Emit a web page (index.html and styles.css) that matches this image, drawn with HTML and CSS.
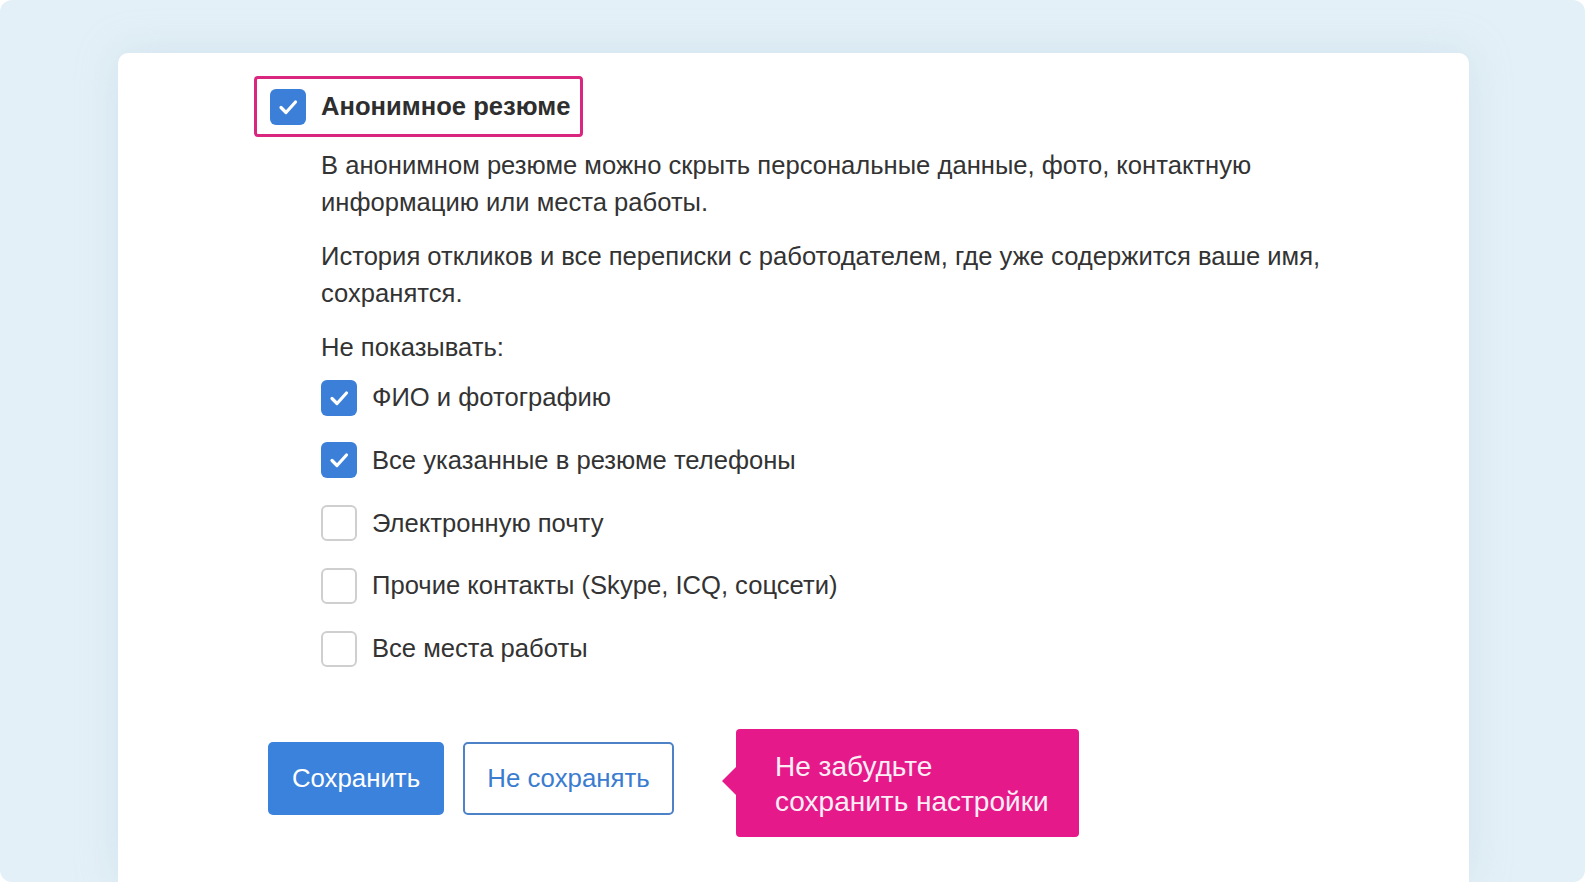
FILE: index.html
```html
<!DOCTYPE html>
<html lang="ru">
<head>
<meta charset="utf-8">
<title>Анонимное резюме</title>
<link rel="stylesheet" href="styles.css">
</head>
<body>
<div class="frame">
  <div class="card">
    <div class="title-box">
      <span class="cb cb-on"><svg viewBox="0 0 36 36" width="36" height="36"><path d="M11 18.5 L16 23.5 L25.5 13" fill="none" stroke="#fff" stroke-width="3.2" stroke-linecap="round" stroke-linejoin="round"/></svg></span>
      <span class="title">Анонимное резюме</span>
    </div>
    <div class="body">
      <p class="para">В анонимном резюме можно скрыть персональные данные, фото, контактную<br>информацию или места работы.</p>
      <p class="para">История откликов и все переписки с работодателем, где уже содержится ваше имя,<br>сохранятся.</p>
      <p class="para label">Не показывать:</p>
      <div class="options">
        <div class="opt"><span class="cb cb-on"><svg viewBox="0 0 36 36" width="36" height="36"><path d="M11 18.5 L16 23.5 L25.5 13" fill="none" stroke="#fff" stroke-width="3.2" stroke-linecap="round" stroke-linejoin="round"/></svg></span><span class="opt-text">ФИО и фотографию</span></div>
        <div class="opt"><span class="cb cb-on"><svg viewBox="0 0 36 36" width="36" height="36"><path d="M11 18.5 L16 23.5 L25.5 13" fill="none" stroke="#fff" stroke-width="3.2" stroke-linecap="round" stroke-linejoin="round"/></svg></span><span class="opt-text">Все указанные в резюме телефоны</span></div>
        <div class="opt"><span class="cb cb-off"></span><span class="opt-text">Электронную почту</span></div>
        <div class="opt"><span class="cb cb-off"></span><span class="opt-text">Прочие контакты (Skype, ICQ, соцсети)</span></div>
        <div class="opt"><span class="cb cb-off"></span><span class="opt-text">Все места работы</span></div>
      </div>
    </div>
    <div class="actions">
      <button class="btn btn-primary">Сохранить</button>
      <button class="btn btn-secondary">Не сохранять</button>
      <div class="hint">Не забудьте<br>сохранить настройки</div>
    </div>
  </div>
</div>
</body>
</html>
```

FILE: styles.css
```css
* { box-sizing: border-box; }
html, body { margin: 0; padding: 0; background: #ffffff; }
body {
  font-family: "Liberation Sans", Arial, sans-serif;
  color: #333333;
  width: 1588px;
  height: 884px;
  overflow: hidden;
}
.frame {
  width: 1585px;
  height: 882px;
  background: #e4f0f7;
  border-radius: 12px;
  padding: 53px 0 0 118px;
  overflow: hidden;
}
.card {
  width: 1351px;
  height: 829px;
  background: #ffffff;
  border-radius: 10px 10px 0 0;
  box-shadow: 0 0 40px rgba(170, 200, 220, 0.35);
  padding: 23px 0 0 136px;
}
.title-box {
  display: inline-flex;
  align-items: center;
  gap: 15px;
  width: 329px;
  height: 61px;
  border: 3px solid #d9267f;
  border-radius: 4px;
  padding-left: 13px;
}
.cb {
  flex: none;
  width: 36px;
  height: 36px;
  border-radius: 6px;
  display: block;
}
.cb svg { display: block; }
.cb-on { background: #3b7fd8; }
.cb-off { background: #fff; border: 2px solid #cfcfcf; }
.title {
  font-size: 25.6px;
  font-weight: bold;
  color: #2e2e2e;
}
.body {
  margin-left: 67px;
  margin-top: 10px;
}
.para {
  margin: 0 0 18px;
  font-size: 25.6px;
  line-height: 36.5px;
}
.label { margin-bottom: 14px; }
.options {
  display: flex;
  flex-direction: column;
  gap: 26.8px;
}
.opt {
  display: flex;
  align-items: center;
  gap: 15px;
  height: 36px;
}
.opt-text { font-size: 25.6px; }
.actions {
  display: flex;
  align-items: flex-start;
  margin-top: 75px;
  margin-left: 14px;
}
.btn {
  font-family: "Liberation Sans", Arial, sans-serif;
  font-size: 25.8px;
  height: 73px;
  border-radius: 5px;
  cursor: pointer;
  padding: 0;
}
.btn-primary {
  width: 176px;
  background: #3a82dc;
  color: #fff;
  border: none;
}
.btn-secondary {
  width: 211px;
  margin-left: 19px;
  background: #fff;
  color: #3a7ccf;
  border: 2px solid #4d83c6;
}
.hint {
  position: relative;
  margin-left: 62px;
  margin-top: -13px;
  width: 343px;
  height: 108px;
  background: #e5198a;
  color: #fdeef6;
  border-radius: 4px;
  font-size: 28px;
  line-height: 35.5px;
  padding: 20px 0 0 39px;
}
.hint::before {
  content: "";
  position: absolute;
  left: -14px;
  top: 38px;
  width: 0;
  height: 0;
  border-top: 14px solid transparent;
  border-bottom: 14px solid transparent;
  border-right: 14px solid #e5198a;
}
```
